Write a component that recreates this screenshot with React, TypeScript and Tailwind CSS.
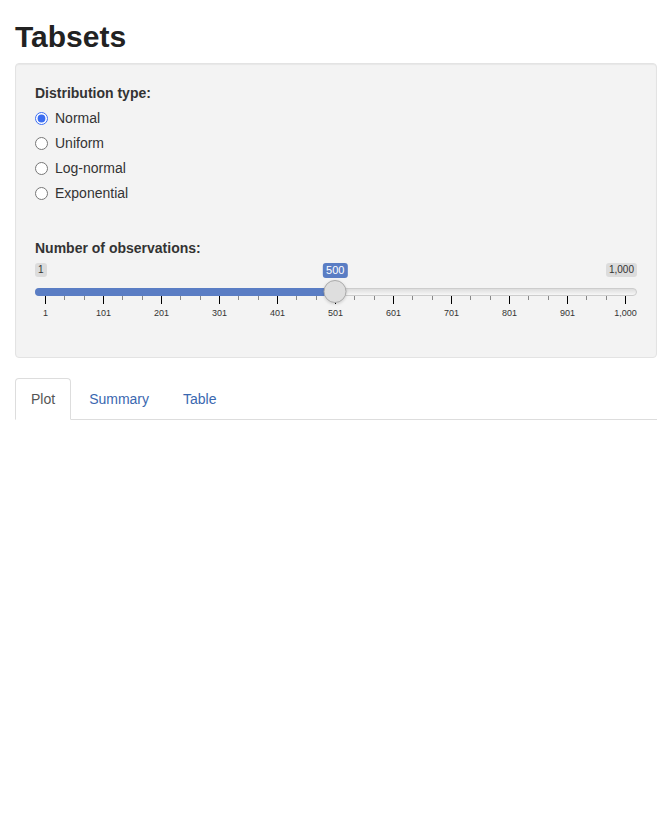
import React from "react";

const options = ["Normal", "Uniform", "Log-normal", "Exponential"];
const gridLabels = ["1", "101", "201", "301", "401", "501", "601", "701", "801", "901", "1,000"];

const GRID_LEFT = 10;
const GRID_WIDTH = 581;

const Slider: React.FC<{ value: number }> = ({ value }) => {
  const handleX = GRID_LEFT + ((value - 1) / 999) * GRID_WIDTH;

  return (
    <div className="flex w-full flex-col">
      {/* min / max badges, current value over them */}
      <div className="relative flex h-[15px] items-start justify-between">
        <span className="rounded-[3px] bg-[#dcdcdc] px-[3px] text-[10px] leading-[14px] text-[#333]">1</span>
        <span className="rounded-[3px] bg-[#dcdcdc] px-[3px] text-[10px] leading-[14px] text-[#333]">1,000</span>
        <span
          className="absolute top-0 -translate-x-1/2 rounded-[3px] bg-[#5a7dc4] px-[3px] text-[11px] leading-[15px] text-white"
          style={{ left: handleX }}
        >
          {value}
        </span>
      </div>

      {/* track with handle */}
      <div className="relative mt-[10px] h-[8px]">
        <div className="h-full rounded-full border border-[#cccccc] bg-gradient-to-b from-[#dddddd] to-[#f7f7f7]" />
        <div
          className="absolute left-0 top-0 h-full rounded-l-full bg-[#5a7dc4]"
          style={{ width: handleX }}
        />
        <div
          className="absolute top-[-8px] h-[23px] w-[23px] -translate-x-1/2 rounded-full border border-[#ababab] bg-[#dedede] shadow-[0_1px_3px_rgba(0,0,0,0.15)]"
          style={{ left: handleX }}
        />
      </div>

      {/* ticks */}
      <div className="mx-[10px] flex h-[8px] w-[581px]">
        {Array.from({ length: 10 }, (_, i) => (
          <div
            key={i}
            className={`flex flex-1 items-start justify-evenly border-l border-black ${
              i === 9 ? "border-r" : ""
            }`}
          >
            <div className="h-[4px] w-px bg-[#888]" />
            <div className="h-[4px] w-px bg-[#888]" />
          </div>
        ))}
      </div>

      {/* tick labels */}
      <div className="mx-[10px] mt-[4px] flex w-[581px] justify-between">
        {gridLabels.map((l) => (
          <div key={l} className="flex w-px justify-center">
            <span className="whitespace-nowrap text-[9px] leading-[11px] text-[#333]">{l}</span>
          </div>
        ))}
      </div>
    </div>
  );
};

const App: React.FC = () => {
  const [dist, setDist] = React.useState("Normal");
  const [tab, setTab] = React.useState("Plot");

  return (
    <div
      className="min-h-[820px] bg-white px-[15px] text-[14px] leading-[20px] text-[#333]"
      style={{ fontFamily: '"Liberation Sans", Arial, sans-serif' }}
    >
      <h2 className="mb-[10px] pt-[20px] text-[30px] font-bold leading-[33px] text-[#222]">
        Tabsets
      </h2>

      <div className="mb-[20px] mt-[10px] flex flex-col rounded-[4px] border border-[#e3e3e3] bg-[#f3f3f3] p-[19px] shadow-[inset_0_1px_1px_rgba(0,0,0,0.05)]">
        <div className="mb-[15px] flex flex-col">
          <label className="mb-[5px] font-bold">Distribution type:</label>
          <div className="flex flex-col gap-[5px]">
            {options.map((o) => (
              <label key={o} className="flex h-[20px] items-center gap-[7px]">
                <input
                  type="radio"
                  name="dist"
                  checked={dist === o}
                  onChange={() => setDist(o)}
                  className="m-0 h-[13px] w-[13px] accent-[#3b6df0]"
                />
                <span>{o}</span>
              </label>
            ))}
          </div>
        </div>

        <div className="mb-[19px] flex flex-col pt-[20px]">
          <label className="mb-[5px] font-bold">Number of observations:</label>
          <Slider value={500} />
        </div>
      </div>

      <div className="flex border-b border-[#dddddd]">
        {["Plot", "Summary", "Table"].map((t) => (
          <button
            key={t}
            type="button"
            onClick={() => setTab(t)}
            className={`-mb-px mr-[2px] rounded-t-[4px] border px-[15px] py-[10px] text-[14px] leading-[20px] ${
              tab === t
                ? "border-[#dddddd] border-b-white bg-white text-[#555]"
                : "border-transparent text-[#3a68b0]"
            }`}
          >
            {t}
          </button>
        ))}
      </div>
    </div>
  );
};

export default App;
